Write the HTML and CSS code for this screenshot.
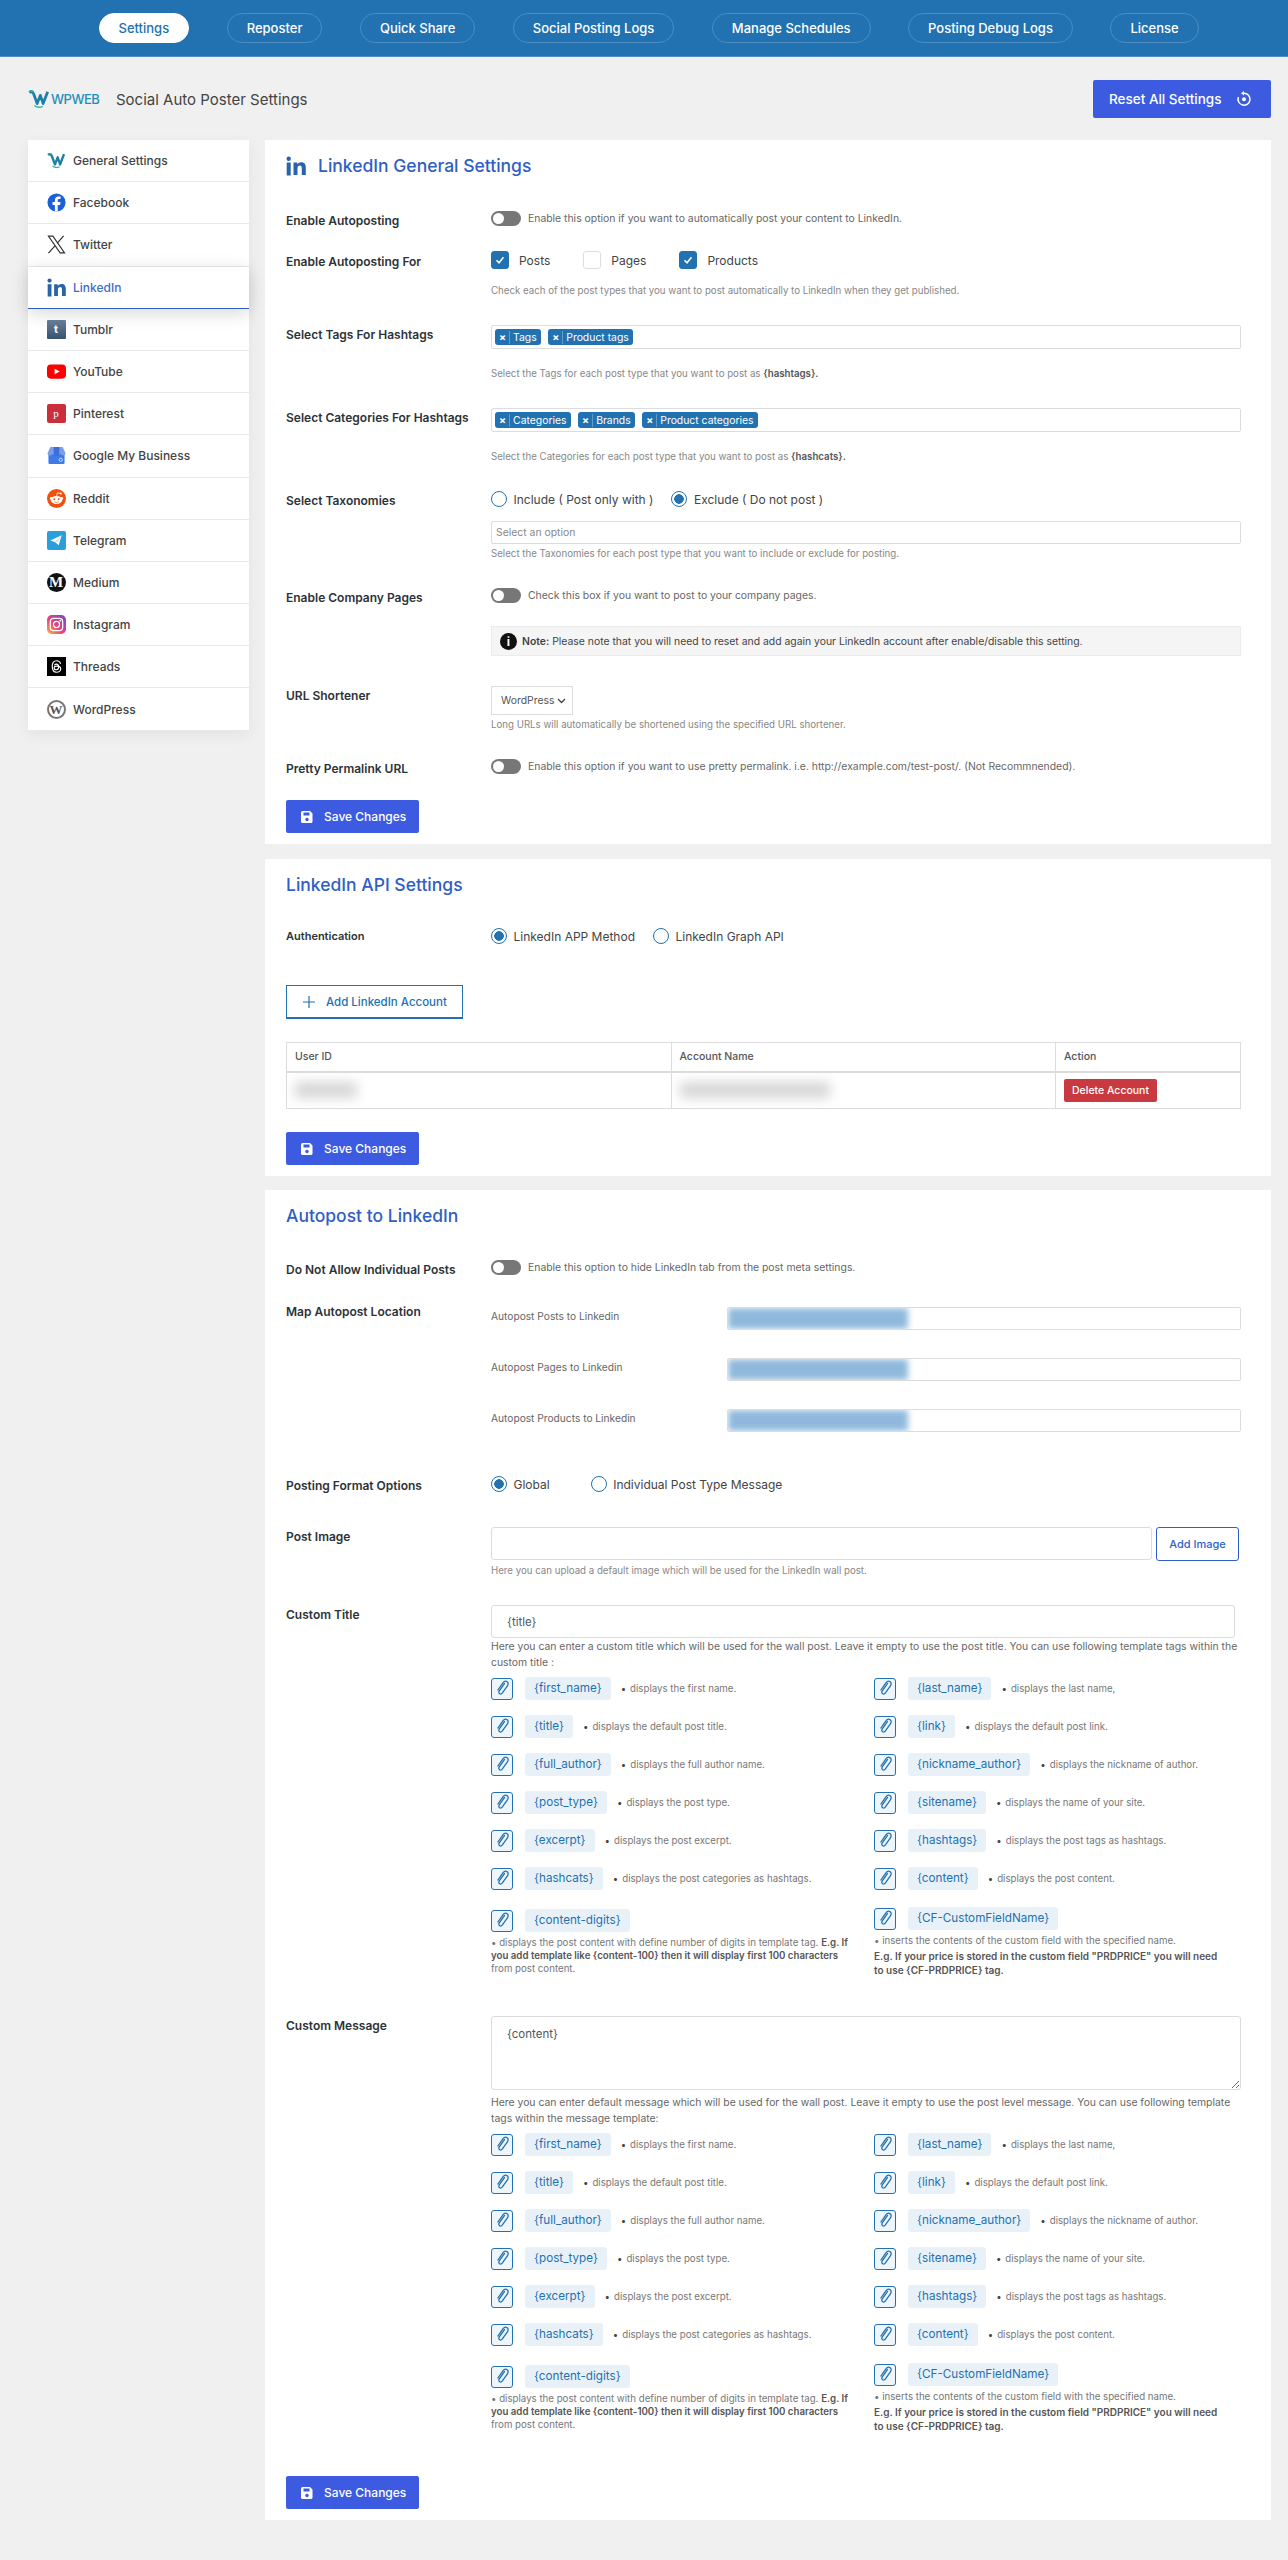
FILE: index.html
```html
<!DOCTYPE html>
<html lang="en">
<head>
  <meta charset="UTF-8" />
  <title>Social Auto Poster Settings</title>
  <link rel="stylesheet" href="styles.css">
</head>
<body>

<svg class="defs" width="0" height="0">
  <symbol id="i-link" viewBox="0 0 22 22">
    <path d="M13.6 6.4l-5.3 7.4c-.8 1.1-.6 2.3.3 2.9.9.6 2 .3 2.8-.8l5-7.1c1.2-1.700.9-3.400-.4-4.200-1.300-.9-2.900-.4-4.100 1.200l-5 7.200" fill="none" stroke="#2271b1" stroke-width="1.300" stroke-linecap="round"/>
  </symbol>
  <symbol id="i-in" viewBox="0 0 20 20">
    <circle cx="2.700" cy="2.700" r="2.200" fill="#2864ab"/>
    <rect x=".7" y="6.500" width="4" height="13" fill="#2864ab"/>
    <path d="M7.500 6.500h3.800v1.800c.8-1.300 2.200-2.100 4-2.100 3.300 0 4.500 2.100 4.500 5.400v7.400h-4v-6.700c0-1.600-.5-2.700-1.900-2.700-1.500 0-2.400 1.100-2.400 2.800v6.600h-4z" fill="#2864ab"/>
  </symbol>
  <symbol id="i-save" viewBox="0 0 14 14">
    <path d="M2.500 1h7.500l2.500 2.500v8a1.500 1.500 0 0 1-1.500 1.500h-8.500a1.500 1.500 0 0 1-1.500-1.500v-9a1.500 1.500 0 0 1 1.500-1.500z" fill="#fff"/>
    <rect x="3.500" y="2.500" width="6" height="3" fill="#3c5be0"/>
    <circle cx="7" cy="9.500" r="1.700" fill="#3c5be0"/>
  </symbol>
  <symbol id="i-w" viewBox="0 0 24 20">
    <path d="M1.500 3c2-1.500 3.500-1 4.500 1l4 11 3.500-9 3 9 5-13" fill="none" stroke="#1f7fa8" stroke-width="3" stroke-linejoin="round"/>
    <path d="M7 17c3 2.500 6 2.500 9 1" fill="none" stroke="#2bb5a5" stroke-width="1.500"/>
    <path d="M1 2c2-1.500 3-1.500 5 0" fill="none" stroke="#2bb5a5" stroke-width="1.500"/>
  </symbol>
</svg>

<div class="topbar">
  <a class="pill pill-active">Settings</a>
  <a class="pill">Reposter</a>
  <a class="pill">Quick Share</a>
  <a class="pill">Social Posting Logs</a>
  <a class="pill">Manage Schedules</a>
  <a class="pill">Posting Debug Logs</a>
  <a class="pill">License</a>
</div>

<div class="titlebar">
  <div class="brand">
    <svg class="brand-w" width="22" height="20" viewBox="0 0 24 20"><use href="#i-w"/></svg>
    <span class="brand-name">WPWEB</span>
  </div>
  <div class="page-title">Social Auto Poster Settings</div>
  <button class="reset-btn">Reset All Settings
    <svg width="16" height="16" viewBox="0 0 16 16"><path d="M8 2.200a6 6 0 1 1-5.600 3.900" fill="none" stroke="#fff" stroke-width="1.500"/><path d="M8 0v4.400l-3-2.200z" fill="#fff"/><circle cx="8" cy="8.200" r="2" fill="#fff"/></svg>
  </button>
</div>

<div class="layout">
  <ul class="sidenav">
    <li><svg class="nav-icon" viewBox="0 0 24 20"><use href="#i-w"/></svg>General Settings</li>
    <li><svg class="nav-icon" viewBox="0 0 20 20"><circle cx="10" cy="10" r="9.500" fill="#1b5fd9"/><path d="M11.300 19.500v-7h2.500l.4-2.900h-2.900v-1.800c0-.9.400-1.500 1.600-1.500h1.400v-2.500c-.6-.1-1.400-.2-2.200-.2-2.300 0-3.800 1.400-3.800 3.900v2.100h-2.500v2.900h2.500v7z" fill="#fff"/></svg>Facebook</li>
    <li><svg class="nav-icon" viewBox="0 0 20 20"><path d="M1.500 1.200h4.700l12.300 17.600h-4.700z" fill="none" stroke="#333" stroke-width="1.200"/><path d="M17.500 1l-6.900 7.800M8.600 11.200l-7.100 7.800" fill="none" stroke="#333" stroke-width="1.300"/></svg>Twitter</li>
    <li class="nav-active"><svg class="nav-icon" viewBox="0 0 20 20"><use href="#i-in"/></svg>LinkedIn</li>
    <li><span class="nav-icon glyph g-tumblr">t</span>Tumblr</li>
    <li><svg class="nav-icon" viewBox="0 0 20 20"><rect y="2.500" width="20" height="15" rx="4" fill="#f00"/><path d="M8 7l5.500 3-5.500 3z" fill="#fff"/></svg>YouTube</li>
    <li><span class="nav-icon glyph g-pinterest">p</span>Pinterest</li>
    <li><svg class="nav-icon" viewBox="0 0 20 20"><path d="M1.500 7.500h17v10a1.500 1.500 0 0 1-1.500 1.500h-14a1.500 1.500 0 0 1-1.500-1.500z" fill="#3f7be8"/><path d="M3.500 1h13l3 6.500a2.500 2.500 0 0 1-5 0 2.300 2.300 0 0 1-4.500 0 2.300 2.300 0 0 1-4.500 0 2.500 2.500 0 0 1-5 0z" fill="#7d9fe8"/><path d="M7 1h6v6.500a3 3 0 0 1-6 0z" fill="#3f6ed8"/><circle cx="14.500" cy="14.500" r="1.700" fill="none" stroke="#cfe0fb" stroke-width="1"/></svg>Google My Business</li>
    <li><svg class="nav-icon" viewBox="0 0 20 20"><circle cx="10" cy="10" r="10" fill="#f0500f"/><ellipse cx="10" cy="11.500" rx="6" ry="4.200" fill="#fff"/><circle cx="4.500" cy="10" r="1.500" fill="#fff"/><circle cx="15.500" cy="10" r="1.500" fill="#fff"/><circle cx="7.700" cy="10.800" r="1" fill="#f0500f"/><circle cx="12.300" cy="10.800" r="1" fill="#f0500f"/><path d="M10 7.500l1-3.500 3 .7" fill="none" stroke="#fff" stroke-width=".8"/><circle cx="14.500" cy="4.700" r="1.100" fill="#fff"/><path d="M7.800 13.400c1.300.9 3.100.9 4.400 0" fill="none" stroke="#f0500f" stroke-width=".8"/></svg>Reddit</li>
    <li><svg class="nav-icon" viewBox="0 0 20 20"><rect width="20" height="20" rx="2" fill="#2a9fdc"/><path d="M15.500 4.500l-12 5.500 3.800 1.300 1 .4 4 3.300z" fill="#fff"/><path d="M7.300 11.300l8.200-6.800-4 7.300z" fill="#d5e8f5"/></svg>Telegram</li>
    <li><span class="nav-icon glyph g-medium">M</span>Medium</li>
    <li><svg class="nav-icon" viewBox="0 0 20 20"><defs><linearGradient id="ig" x1="0" y1="1" x2="1" y2="0"><stop offset="0" stop-color="#fdb33f"/><stop offset=".45" stop-color="#e8427a"/><stop offset="1" stop-color="#6c4ad0"/></linearGradient></defs><rect width="20" height="20" rx="5" fill="url(#ig)"/><rect x="3.500" y="3.500" width="13" height="13" rx="3.500" fill="none" stroke="#fff" stroke-width="1.300"/><circle cx="10" cy="10" r="3.200" fill="none" stroke="#fff" stroke-width="1.300"/><circle cx="14" cy="6" r=".9" fill="#fff"/></svg>Instagram</li>
    <li><svg class="nav-icon" viewBox="0 0 20 20"><rect width="20" height="20" fill="#000"/><path d="M14.300 7.300c-.5-2.200-2-3.300-4.200-3.300-3 0-4.600 2.400-4.600 6s1.600 6 4.600 6c2.400 0 4.300-1.500 4.300-3.400 0-2-1.700-3-4-3-1.700 0-2.900.7-2.900 2 0 1.100 1 1.800 2.200 1.800 1.700 0 2.600-1.300 2.600-3.100 0-1.600-.8-2.800-2.300-2.800-1 0-1.700.4-2.200 1.200" fill="none" stroke="#fff" stroke-width="1.200"/></svg>Threads</li>
    <li><span class="nav-icon glyph g-wp">W</span>WordPress</li>
  </ul>

  <div class="content">

    <section class="panel">
      <h2 class="panel-title"><svg class="title-icon" width="20" height="20"><use href="#i-in"/></svg>LinkedIn General Settings</h2>

      <div class="row gap-33">
        <div class="row-label">Enable Autoposting</div>
        <div class="row-body toggle-line"><span class="toggle"></span>Enable this option if you want to automatically post your content to LinkedIn.</div>
      </div>

      <div class="row gap-25">
        <div class="row-label label-3">Enable Autoposting For</div>
        <div class="row-body">
          <div class="checks">
            <span class="check check-on"><svg width="12" height="12" viewBox="0 0 12 12"><path d="M2.500 6.300l2.500 2.500 4.500-5.500" fill="none" stroke="#fff" stroke-width="1.500"/></svg></span><span class="check-text">Posts</span>
            <span class="check"></span><span class="check-text">Pages</span>
            <span class="check check-on"><svg width="12" height="12" viewBox="0 0 12 12"><path d="M2.500 6.300l2.500 2.500 4.500-5.500" fill="none" stroke="#fff" stroke-width="1.500"/></svg></span><span class="check-text">Products</span>
          </div>
          <p class="help help-15">Check each of the post types that you want to post automatically to LinkedIn when they get published.</p>
        </div>
      </div>

      <div class="row">
        <div class="row-label">Select Tags For Hashtags</div>
        <div class="row-body">
          <div class="field chips"><span class="chip"><i>×</i>Tags</span><span class="chip"><i>×</i>Product tags</span></div>
          <p class="help help-18">Select the Tags for each post type that you want to post as <b>{hashtags}.</b></p>
        </div>
      </div>

      <div class="row">
        <div class="row-label">Select Categories For Hashtags</div>
        <div class="row-body">
          <div class="field chips"><span class="chip"><i>×</i>Categories</span><span class="chip"><i>×</i>Brands</span><span class="chip"><i>×</i>Product categories</span></div>
          <p class="help help-18">Select the Categories for each post type that you want to post as <b>{hashcats}.</b></p>
        </div>
      </div>

      <div class="row">
        <div class="row-label">Select Taxonomies</div>
        <div class="row-body">
          <div class="radios radios-tight"><span class="radio"></span><span class="radio-text">Include ( Post only with )</span><span class="radio radio-on"></span><span class="radio-text">Exclude ( Do not post )</span></div>
          <div class="field field-placeholder">Select an option</div>
          <p class="help">Select the Taxonomies for each post type that you want to include or exclude for posting.</p>
        </div>
      </div>

      <div class="row">
        <div class="row-label">Enable Company Pages</div>
        <div class="row-body">
          <div class="toggle-line"><span class="toggle"></span>Check this box if you want to post to your company pages.</div>
          <div class="note"><span class="note-icon">i</span><span><b>Note:</b> Please note that you will need to reset and add again your LinkedIn account after enable/disable this setting.</span></div>
        </div>
      </div>

      <div class="row gap-30">
        <div class="row-label">URL Shortener</div>
        <div class="row-body">
          <div class="select">WordPress<svg width="9" height="6" viewBox="0 0 9 6"><path d="M1 1l3.500 3.500 3.500-3.500" fill="none" stroke="#444" stroke-width="1.300"/></svg></div>
          <p class="help">Long URLs will automatically be shortened using the specified URL shortener.</p>
        </div>
      </div>

      <div class="row">
        <div class="row-label">Pretty Permalink URL</div>
        <div class="row-body toggle-line"><span class="toggle"></span>Enable this option if you want to use pretty permalink. i.e. http://example.com/test-post/. (Not Recommnended).</div>
      </div>

      <button class="save-btn"><svg width="14" height="14"><use href="#i-save"/></svg>Save Changes</button>
    </section>

    <section class="panel panel-api">
      <h2 class="panel-title">LinkedIn API Settings</h2>

      <div class="row gap-31">
        <div class="row-label label-small">Authentication</div>
        <div class="row-body">
          <div class="radios radios-tight"><span class="radio radio-on"></span><span class="radio-text">LinkedIn APP Method</span><span class="radio"></span><span class="radio-text">LinkedIn Graph API</span></div>
        </div>
      </div>

      <button class="add-btn"><svg width="14" height="14" viewBox="0 0 14 14"><path d="M7 1v12M1 7h12" stroke="#2271b1" stroke-width="1.200"/></svg>Add LinkedIn Account</button>

      <table class="accounts">
        <thead><tr><th class="col-id">User ID</th><th class="col-name">Account Name</th><th>Action</th></tr></thead>
        <tbody>
          <tr>
            <td><div class="redact redact-id"></div></td>
            <td><div class="redact redact-name"></div></td>
            <td><button class="delete-btn">Delete Account</button></td>
          </tr>
        </tbody>
      </table>

      <button class="save-btn save-23"><svg width="14" height="14"><use href="#i-save"/></svg>Save Changes</button>
    </section>

    <section class="panel">
      <h2 class="panel-title">Autopost to LinkedIn</h2>

      <div class="row gap-32">
        <div class="row-label">Do Not Allow Individual Posts</div>
        <div class="row-body toggle-line"><span class="toggle"></span>Enable this option to hide LinkedIn tab from the post meta settings.</div>
      </div>

      <div class="row gap-29">
        <div class="row-label label-0">Map Autopost Location</div>
        <div class="row-body map">
          <div class="map-row"><span class="map-label">Autopost Posts to Linkedin</span><div class="field map-field"><div class="map-blur"></div></div></div>
          <div class="map-row"><span class="map-label">Autopost Pages to Linkedin</span><div class="field map-field"><div class="map-blur"></div></div></div>
          <div class="map-row"><span class="map-label">Autopost Products to Linkedin</span><div class="field map-field"><div class="map-blur"></div></div></div>
        </div>
      </div>

      <div class="row gap-44">
        <div class="row-label">Posting Format Options</div>
        <div class="row-body">
          <div class="radios radios-wide"><span class="radio radio-on"></span><span class="radio-text">Global</span><span class="radio"></span><span class="radio-text">Individual Post Type Message</span></div>
        </div>
      </div>

      <div class="row gap-35">
        <div class="row-label">Post Image</div>
        <div class="row-body">
          <div class="image-line"><input class="text-input image-input" type="text"><button class="image-btn">Add Image</button></div>
          <p class="help">Here you can upload a default image which will be used for the LinkedIn wall post.</p>
        </div>
      </div>

      <div class="row">
        <div class="row-label">Custom Title</div>
        <div class="row-body">
          <input class="text-input title-input" type="text" value="{title}">
          <p class="desc">Here you can enter a custom title which will be used for the wall post. Leave it empty to use the post title. You can use following template tags within the custom title :</p>
          <div class="tags">
            <div class="tag-line"><span class="tag-icon"><svg width="22" height="22"><use href="#i-link"/></svg></span><span class="tag">{first_name}</span><span class="tag-text">displays the first name.</span></div>
            <div class="tag-line"><span class="tag-icon"><svg width="22" height="22"><use href="#i-link"/></svg></span><span class="tag">{last_name}</span><span class="tag-text">displays the last name,</span></div>
            <div class="tag-line"><span class="tag-icon"><svg width="22" height="22"><use href="#i-link"/></svg></span><span class="tag">{title}</span><span class="tag-text">displays the default post title.</span></div>
            <div class="tag-line"><span class="tag-icon"><svg width="22" height="22"><use href="#i-link"/></svg></span><span class="tag">{link}</span><span class="tag-text">displays the default post link.</span></div>
            <div class="tag-line"><span class="tag-icon"><svg width="22" height="22"><use href="#i-link"/></svg></span><span class="tag">{full_author}</span><span class="tag-text">displays the full author name.</span></div>
            <div class="tag-line"><span class="tag-icon"><svg width="22" height="22"><use href="#i-link"/></svg></span><span class="tag">{nickname_author}</span><span class="tag-text">displays the nickname of author.</span></div>
            <div class="tag-line"><span class="tag-icon"><svg width="22" height="22"><use href="#i-link"/></svg></span><span class="tag">{post_type}</span><span class="tag-text">displays the post type.</span></div>
            <div class="tag-line"><span class="tag-icon"><svg width="22" height="22"><use href="#i-link"/></svg></span><span class="tag">{sitename}</span><span class="tag-text">displays the name of your site.</span></div>
            <div class="tag-line"><span class="tag-icon"><svg width="22" height="22"><use href="#i-link"/></svg></span><span class="tag">{excerpt}</span><span class="tag-text">displays the post excerpt.</span></div>
            <div class="tag-line"><span class="tag-icon"><svg width="22" height="22"><use href="#i-link"/></svg></span><span class="tag">{hashtags}</span><span class="tag-text">displays the post tags as hashtags.</span></div>
            <div class="tag-line"><span class="tag-icon"><svg width="22" height="22"><use href="#i-link"/></svg></span><span class="tag">{hashcats}</span><span class="tag-text">displays the post categories as hashtags.</span></div>
            <div class="tag-line"><span class="tag-icon"><svg width="22" height="22"><use href="#i-link"/></svg></span><span class="tag">{content}</span><span class="tag-text">displays the post content.</span></div>
            <div class="tag-block tag-block-low">
              <div class="tag-line"><span class="tag-icon"><svg width="22" height="22"><use href="#i-link"/></svg></span><span class="tag">{content-digits}</span></div>
              <p class="tag-note">• displays the post content with define number of digits in template tag. <b>E.g. If</b> <b>you add template like {content-100} then it will display first 100 characters</b> from post content.</p>
            </div>
            <div class="tag-block">
              <div class="tag-line"><span class="tag-icon"><svg width="22" height="22"><use href="#i-link"/></svg></span><span class="tag">{CF-CustomFieldName}</span></div>
              <p class="tag-note">• inserts the contents of the custom field with the specified name.</p>
              <p class="tag-eg">E.g. If your price is stored in the custom field "PRDPRICE" you will need to use {CF-PRDPRICE} tag.</p>
            </div>
          </div>
        </div>
      </div>

      <div class="row gap-message">
        <div class="row-label">Custom Message</div>
        <div class="row-body">
          <textarea class="message-input">{content}</textarea>
          <p class="desc desc-msg">Here you can enter default message which will be used for the wall post. Leave it empty to use the post level message. You can use following template tags within the message template:</p>
          <div class="tags">
            <div class="tag-line"><span class="tag-icon"><svg width="22" height="22"><use href="#i-link"/></svg></span><span class="tag">{first_name}</span><span class="tag-text">displays the first name.</span></div>
            <div class="tag-line"><span class="tag-icon"><svg width="22" height="22"><use href="#i-link"/></svg></span><span class="tag">{last_name}</span><span class="tag-text">displays the last name,</span></div>
            <div class="tag-line"><span class="tag-icon"><svg width="22" height="22"><use href="#i-link"/></svg></span><span class="tag">{title}</span><span class="tag-text">displays the default post title.</span></div>
            <div class="tag-line"><span class="tag-icon"><svg width="22" height="22"><use href="#i-link"/></svg></span><span class="tag">{link}</span><span class="tag-text">displays the default post link.</span></div>
            <div class="tag-line"><span class="tag-icon"><svg width="22" height="22"><use href="#i-link"/></svg></span><span class="tag">{full_author}</span><span class="tag-text">displays the full author name.</span></div>
            <div class="tag-line"><span class="tag-icon"><svg width="22" height="22"><use href="#i-link"/></svg></span><span class="tag">{nickname_author}</span><span class="tag-text">displays the nickname of author.</span></div>
            <div class="tag-line"><span class="tag-icon"><svg width="22" height="22"><use href="#i-link"/></svg></span><span class="tag">{post_type}</span><span class="tag-text">displays the post type.</span></div>
            <div class="tag-line"><span class="tag-icon"><svg width="22" height="22"><use href="#i-link"/></svg></span><span class="tag">{sitename}</span><span class="tag-text">displays the name of your site.</span></div>
            <div class="tag-line"><span class="tag-icon"><svg width="22" height="22"><use href="#i-link"/></svg></span><span class="tag">{excerpt}</span><span class="tag-text">displays the post excerpt.</span></div>
            <div class="tag-line"><span class="tag-icon"><svg width="22" height="22"><use href="#i-link"/></svg></span><span class="tag">{hashtags}</span><span class="tag-text">displays the post tags as hashtags.</span></div>
            <div class="tag-line"><span class="tag-icon"><svg width="22" height="22"><use href="#i-link"/></svg></span><span class="tag">{hashcats}</span><span class="tag-text">displays the post categories as hashtags.</span></div>
            <div class="tag-line"><span class="tag-icon"><svg width="22" height="22"><use href="#i-link"/></svg></span><span class="tag">{content}</span><span class="tag-text">displays the post content.</span></div>
            <div class="tag-block tag-block-low">
              <div class="tag-line"><span class="tag-icon"><svg width="22" height="22"><use href="#i-link"/></svg></span><span class="tag">{content-digits}</span></div>
              <p class="tag-note">• displays the post content with define number of digits in template tag. <b>E.g. If</b> <b>you add template like {content-100} then it will display first 100 characters</b> from post content.</p>
            </div>
            <div class="tag-block">
              <div class="tag-line"><span class="tag-icon"><svg width="22" height="22"><use href="#i-link"/></svg></span><span class="tag">{CF-CustomFieldName}</span></div>
              <p class="tag-note">• inserts the contents of the custom field with the specified name.</p>
              <p class="tag-eg">E.g. If your price is stored in the custom field "PRDPRICE" you will need to use {CF-PRDPRICE} tag.</p>
            </div>
          </div>
        </div>
      </div>

      <button class="save-btn save-last"><svg width="14" height="14"><use href="#i-save"/></svg>Save Changes</button>
    </section>

  </div>
</div>

</body>
</html>
```

FILE: styles.css
```css
html, body {
  margin: 0;
  padding: 0;
  background: #f0f0f1;
  color: #3c434a;
  font-family: 'Inter', sans-serif;
  font-size: 12px;
}

.defs {
  position: absolute;
}

button {
  font-family: 'Inter', sans-serif;
  cursor: pointer;
}

/* top bar */
.topbar {
  display: flex;
  gap: 37.5px;
  height: 57px;
  padding: 13px 0 0 98.5px;
  box-sizing: border-box;
  background: #2271b1;
  border-bottom: 1px solid #4d8fc4;
}

.pill {
  height: 30px;
  padding: 0 19px;
  box-sizing: border-box;
  border: 1px solid #4a8cc1;
  border-radius: 15px;
  color: #fff;
  font-size: 13px;
  font-weight: 500;
  line-height: 28px;
}

.pill-active {
  background: #fff;
  border-color: #fff;
  color: #2271b1;
}

/* title row */
.titlebar {
  display: flex;
  align-items: center;
  height: 38px;
  margin: 23px 17px 22px 28px;
}

.brand {
  display: flex;
  align-items: center;
  width: 88px;
}

.brand-w {
  flex: none;
}

.brand-name {
  margin-left: 1px;
  color: #1f8fb8;
  font-size: 13px;
  font-weight: 500;
  letter-spacing: -0.5px;
}

.page-title {
  flex: 1;
  font-size: 15px;
  color: #444;
}

.reset-btn {
  display: flex;
  align-items: center;
  gap: 15px;
  width: 178px;
  height: 38px;
  padding: 0 0 0 16px;
  border: 0;
  border-radius: 2px;
  background: #3c5be0;
  color: #fff;
  font-size: 13.500px;
  font-weight: 500;
}

/* sidebar + panels */
.layout {
  display: flex;
  align-items: flex-start;
  gap: 16px;
  padding: 0 17px 0 28px;
}

.sidenav {
  flex: none;
  width: 221px;
  margin: 0;
  padding: 0;
  list-style: none;
  background: #fff;
  box-shadow: 0 4px 14px rgba(0, 0, 0, 0.06);
}

.sidenav li {
  display: flex;
  align-items: center;
  height: 42.200px;
  padding-left: 18.500px;
  box-sizing: border-box;
  border-bottom: 1.500px solid #e8e9ea;
  color: #444;
  font-size: 12px;
  font-weight: 500;
}

.sidenav li.nav-active {
  position: relative;
  border-bottom: 1.500px solid #2f5fc4;
  color: #3f6cc9;
  box-shadow: 0 4px 18px rgba(0, 0, 0, 0.16);
}

.nav-icon {
  flex: none;
  width: 19px;
  height: 19px;
  margin-right: 7.500px;
}

.glyph {
  display: flex;
  align-items: center;
  justify-content: center;
  font-family: 'Liberation Serif', serif;
  font-weight: 700;
  color: #fff;
  line-height: 1;
}

.g-tumblr {
  background: linear-gradient(#6a8299, #37526e);
  border-radius: 1px;
  font-family: 'Inter', sans-serif;
  font-size: 11px;
}

.g-pinterest {
  background: #cb2f3c;
  border-radius: 2px;
  font-size: 11px;
  font-weight: 400;
}

.g-medium {
  background: #111;
  border-radius: 50%;
  font-size: 15px;
}

.g-wp {
  background: #fff;
  border: 2px solid #777;
  box-sizing: border-box;
  border-radius: 50%;
  color: #555;
  font-size: 13px;
}

.content {
  flex: 1;
  min-width: 0;
}

.panel {
  padding: 14px 30px 11px 21px;
  background: #fff;
  margin-bottom: 14px;
}

.panel-api {
  margin-top: 15px;
}

.panel-title {
  display: flex;
  align-items: center;
  margin: 0;
  color: #2f5fc4;
  font-size: 17.500px;
  font-weight: 500;
  line-height: 24px;
}

.title-icon {
  margin-right: 12px;
}

/* form rows */
.row {
  display: flex;
  margin-top: 27px;
}

.gap-25 { margin-top: 25px; }
.gap-29 { margin-top: 29px; }
.gap-30 { margin-top: 30px; }
.gap-31 { margin-top: 31px; }
.gap-32 { margin-top: 32px; }
.gap-33 { margin-top: 33px; }
.gap-35 { margin-top: 35px; }
.gap-44 { margin-top: 44px; }
.gap-message { margin-top: 39px; }

.row-label {
  flex: none;
  width: 205px;
  margin-bottom: -6px;
  padding-top: 2px;
  color: #2c3338;
  font-size: 12px;
  font-weight: 600;
  line-height: 16px;
}

.label-3 { padding-top: 3px; }
.label-0 { padding-top: 0; }

.label-small {
  padding-top: 0;
  font-size: 11px;
}

.row-body {
  flex: 1;
  min-width: 0;
}

.toggle-line {
  display: flex;
  align-items: center;
  height: 15px;
  color: #666;
  font-size: 10.400px;
}

.toggle {
  position: relative;
  flex: none;
  width: 30px;
  height: 15px;
  margin-right: 7px;
  border-radius: 8px;
  background: #777;
}

.toggle::after {
  content: "";
  position: absolute;
  left: 2px;
  top: 2px;
  width: 11px;
  height: 11px;
  border-radius: 50%;
  background: #fff;
}

.checks {
  display: flex;
  align-items: center;
  height: 18px;
}

.check {
  display: flex;
  align-items: center;
  justify-content: center;
  flex: none;
  width: 18px;
  height: 18px;
  box-sizing: border-box;
  border: 1px solid #ddd;
  border-radius: 3px;
}

.check-on {
  border-color: #2271b1;
  background: #2271b1;
}

.check-text {
  margin: 0 33px 0 10px;
  color: #444;
  font-size: 12px;
}

.help {
  margin: 3px 0 0;
  color: #888;
  font-size: 9.700px;
  line-height: 14px;
}

.help b {
  color: #555;
  font-weight: 600;
}

.help-15 { margin-top: 15px; }
.help-18 { margin-top: 18px; }

.field {
  height: 24px;
  box-sizing: border-box;
  border: 1px solid #dcdcde;
  border-radius: 2px;
  background: #fff;
}

.chips {
  display: flex;
  align-items: center;
  gap: 7.500px;
  padding-left: 3px;
}

.chip {
  display: flex;
  align-items: center;
  height: 16px;
  padding: 0 4px;
  border-radius: 3px;
  background: #2271b1;
  color: #fff;
  font-size: 10.400px;
}

.chip i {
  padding-right: 3px;
  margin-right: 3px;
  border-right: 1px solid #5f9bcc;
  font-style: normal;
  font-weight: 700;
}

.radios {
  display: flex;
  align-items: center;
  height: 16px;
  color: #444;
  font-size: 12px;
}

.radio {
  flex: none;
  width: 16px;
  height: 16px;
  box-sizing: border-box;
  border: 1.500px solid #2271b1;
  border-radius: 50%;
  background: #fff;
}

.radio-on {
  background: radial-gradient(circle, #2271b1 0 4.500px, #fff 5px);
}

.radio-text {
  margin: 0 18px 0 6.500px;
}

.radios-wide .radio-text {
  margin-right: 41px;
}

.field-placeholder {
  display: flex;
  align-items: center;
  height: 23px;
  margin-top: 14px;
  padding-left: 4px;
  color: #888;
  font-size: 10.400px;
}

.note {
  display: flex;
  align-items: center;
  height: 30px;
  margin-top: 23px;
  padding-left: 8px;
  border: 1px solid #ececec;
  box-sizing: border-box;
  background: #f5f5f5;
  color: #444;
  font-size: 10.400px;
}

.note b {
  font-weight: 600;
}

.note-icon {
  flex: none;
  width: 17px;
  height: 17px;
  margin-right: 5px;
  border-radius: 50%;
  background: #111;
  color: #fff;
  font-size: 12px;
  font-weight: 700;
  line-height: 17px;
  text-align: center;
}

.select {
  display: flex;
  align-items: center;
  gap: 3px;
  width: 82px;
  height: 29px;
  padding-left: 9px;
  box-sizing: border-box;
  border: 1px solid #dcdcde;
  color: #555;
  font-size: 10.400px;
}

.save-btn {
  display: flex;
  align-items: center;
  gap: 10px;
  width: 133px;
  height: 33px;
  margin-top: 26px;
  padding: 0 0 0 14px;
  border: 0;
  border-radius: 2px;
  background: #3c5be0;
  color: #fff;
  font-size: 12px;
  font-weight: 500;
}

.save-23 { margin-top: 23px; }
.save-last { margin-top: 43px; }

/* api panel */
.add-btn {
  display: flex;
  align-items: center;
  gap: 10px;
  width: 177px;
  height: 34px;
  margin-top: 41px;
  padding: 0 0 0 15px;
  border: 1.500px solid #2271b1;
  border-bottom-width: 2px;
  background: #fff;
  color: #2271b1;
  font-size: 11.500px;
  font-weight: 500;
}

.accounts {
  width: 955px;
  margin-top: 23px;
  border-collapse: collapse;
  table-layout: fixed;
  border: 1px solid #dcdcde;
}

.accounts th,
.accounts td {
  padding: 0 8px;
  box-sizing: border-box;
  border: 1px solid #dcdcde;
  text-align: left;
}

.accounts th {
  height: 29px;
  color: #555;
  font-size: 10.500px;
  font-weight: 500;
  border-bottom-width: 2px;
}

.accounts td {
  height: 37px;
}

.col-id,
.col-name {
  width: 384.500px;
}

.redact {
  height: 16px;
  background: #d6d6d6;
  filter: blur(6px);
}

.redact-id { width: 62px; }
.redact-name { width: 150px; }

.delete-btn {
  display: block;
  width: 93px;
  height: 23px;
  padding: 0;
  border: 0;
  border-radius: 2px;
  background: #c83a3f;
  color: #fff;
  font-size: 10.500px;
  font-weight: 500;
}

/* autopost panel */
.map {
  padding-top: 3px;
}

.map-row {
  display: flex;
  margin-bottom: 28px;
}

.map-row:last-child {
  margin-bottom: 0;
}

.map-label {
  flex: none;
  width: 236px;
  padding-top: 2px;
  color: #666;
  font-size: 10.200px;
  line-height: 14px;
}

.map-field {
  flex: 1;
  height: 23px;
  overflow: hidden;
}

.map-blur {
  width: 180px;
  height: 100%;
  background: #8fb9dc;
  filter: blur(3px);
}

.text-input {
  display: block;
  box-sizing: border-box;
  border: 1px solid #dcdcde;
  border-radius: 3px;
  background: #fff;
  color: #50575e;
  font-family: 'Inter', sans-serif;
  font-size: 11.500px;
  outline: 0;
}

.image-line {
  display: flex;
  gap: 4px;
}

.image-input {
  width: 661px;
  height: 33px;
}

.image-btn {
  width: 83px;
  height: 34px;
  padding: 0;
  border: 1.500px solid #2f5fc4;
  border-radius: 3px;
  background: #fff;
  color: #2f5fc4;
  font-size: 11px;
  font-weight: 500;
}

.title-input {
  width: 744px;
  height: 33px;
  padding: 0 15px;
}

.desc {
  margin: 1px 0 0;
  color: #666;
  font-size: 10.400px;
  line-height: 15.500px;
}

.desc-msg {
  margin-top: 5px;
}

.message-input {
  display: block;
  width: 750px;
  height: 74px;
  padding: 10px 15px;
  box-sizing: border-box;
  border: 1px solid #dcdcde;
  border-radius: 3px;
  color: #50575e;
  font-family: 'Inter', sans-serif;
  font-size: 11.500px;
  outline: 0;
}

.tags {
  display: grid;
  grid-template-columns: 383px 367px;
  row-gap: 15px;
  margin-top: 7px;
}

.tag-line {
  display: flex;
  align-items: center;
  height: 23px;
}

.tag-icon {
  flex: none;
  width: 22px;
  height: 22px;
  margin-right: 12px;
  box-sizing: border-box;
  border: 1.500px solid #2271b1;
  border-radius: 3px;
  background: #eef6fc;
  overflow: hidden;
}

.tag-icon svg {
  display: block;
  margin: -1.500px;
}

.tag {
  height: 23px;
  padding: 0 9px;
  border-radius: 3px;
  background: #e9f1f8;
  color: #2271b1;
  font-size: 11.700px;
  line-height: 22px;
}

.tag-text {
  margin-left: 10px;
  color: #777;
  font-size: 9.700px;
}

.tag-text::before {
  content: "•";
  margin-right: 4px;
  color: #444;
}

.tag-block {
  margin-top: 2px;
}

.tag-block-low {
  margin-top: 4px;
}

.tag-note {
  margin: 4px 0 0;
  color: #777;
  font-size: 9.700px;
  line-height: 13px;
  width: 362px;
}

.tag-note b {
  color: #555;
  font-weight: 600;
}

.tag-eg {
  margin: 3px 0 0;
  color: #555;
  font-size: 10px;
  font-weight: 600;
  line-height: 13.500px;
  width: 350px;
}
```
